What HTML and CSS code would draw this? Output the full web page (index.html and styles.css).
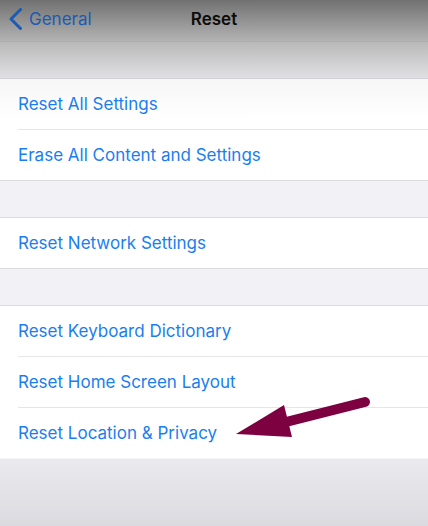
FILE: index.html
```
<!DOCTYPE html>
<html lang="en">
<head>
  <meta charset="UTF-8" />
  <meta name="viewport" content="width=device-width, initial-scale=1.0" />
  <title>Reset</title>
  <link rel="stylesheet" href="styles.css">
</head>
<body>
  <div class="navbar">
    <a class="back" href="#">
      <svg width="14" height="22" viewBox="0 0 14 22"><path d="M12.5 1.5 L3 11 L12.5 20.5" fill="none" stroke="currentColor" stroke-width="3" stroke-linecap="round" stroke-linejoin="round"/></svg>
      <span>General</span>
    </a>
    <div class="title">Reset</div>
  </div>

  <div class="spacer top"></div>

  <ul class="group">
    <li>Reset All Settings</li>
    <li>Erase All Content and Settings</li>
  </ul>

  <div class="spacer"></div>

  <ul class="group">
    <li>Reset Network Settings</li>
  </ul>

  <div class="spacer"></div>

  <ul class="group">
    <li>Reset Keyboard Dictionary</li>
    <li>Reset Home Screen Layout</li>
    <li>Reset Location &amp; Privacy</li>
  </ul>

  <div class="bottom"></div>

  <!-- annotation arrow -->
  <svg class="arrow" width="428" height="526" viewBox="0 0 428 526">
    <line x1="365" y1="402" x2="282" y2="423" stroke="#7d0040" stroke-width="10" stroke-linecap="round"/>
    <polygon points="236,434 284,405 292,437" fill="#7d0040"/>
  </svg>
</body>
</html>
```

FILE: styles.css
```
body {
  margin: 0;
  width: 428px;
  height: 526px;
  overflow: hidden;
  position: relative;
  font-family: Inter, "Liberation Sans", Arial, sans-serif;
  background: #f0f0f4;
}

.navbar {
  height: 41px;
  display: flex;
  align-items: center;
  justify-content: center;
  position: relative;
  background: linear-gradient(#717171, #b3b3b3);
  border-bottom: 1px solid #aeaeae;
}

.back {
  position: absolute;
  left: 8px;
  top: 8px;
  display: flex;
  align-items: center;
  gap: 7px;
  color: #1b5bb3;
  text-decoration: none;
  font-size: 17px;
}

.title {
  font-size: 17px;
  font-weight: 600;
  color: #0c0c0c;
  margin-top: -3px;
}

.spacer {
  height: 36px;
  background: #f1f1f6;
}

.spacer.top {
  height: 36px;
  background: linear-gradient(#b9b9b9, #e0e0e4);
  border-bottom: 1px solid #d2d2d6;
}

.group {
  list-style: none;
  margin: 0;
  padding: 0 0 0 18px;
  background: #ffffff;
  border-top: 1px solid #dcdce0;
  border-bottom: 1px solid #dcdce0;
}

.group:nth-of-type(1) {
  border-top: none;
  background: linear-gradient(#f6f6f6, #ffffff 40%);
}

.group:last-of-type {
  border-bottom: 1px solid #f4f4f6;
}

.group li {
  height: 50px;
  display: flex;
  align-items: center;
  font-size: 17px;
  color: #1a7ef0;
  border-bottom: 1px solid #e6e6e9;
}

.group li:last-child {
  border-bottom: none;
}

.bottom {
  height: 80px;
  background: linear-gradient(#eaeaee, #d8d7dd);
}

.arrow {
  position: absolute;
  left: 0;
  top: 0;
  pointer-events: none;
}
```
